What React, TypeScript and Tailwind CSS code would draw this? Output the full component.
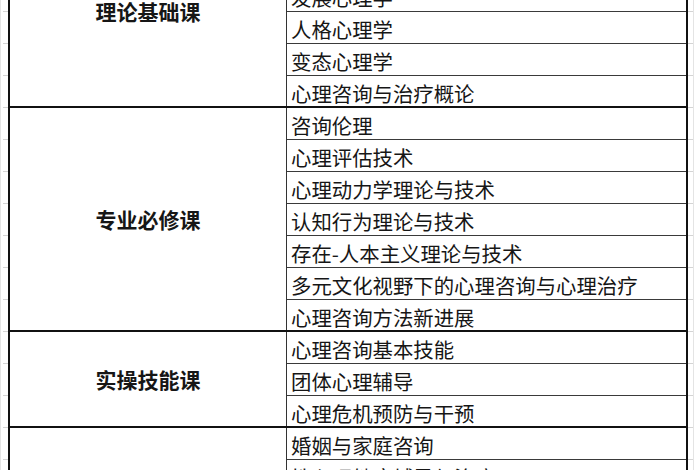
const groups: { label: string; items: string[] }[] = [
  {
    label: "理论基础课",
    items: ["普通心理学", "社会心理学", "发展心理学", "人格心理学", "变态心理学", "心理咨询与治疗概论"],
  },
  {
    label: "专业必修课",
    items: [
      "咨询伦理",
      "心理评估技术",
      "心理动力学理论与技术",
      "认知行为理论与技术",
      "存在-人本主义理论与技术",
      "多元文化视野下的心理咨询与心理治疗",
      "心理咨询方法新进展",
    ],
  },
  {
    label: "实操技能课",
    items: ["心理咨询基本技能", "团体心理辅导", "心理危机预防与干预"],
  },
  {
    label: "选修课",
    items: ["婚姻与家庭咨询", "性心理健康辅导与治疗", "儿童青少年心理咨询", "心理测量"],
  },
];

const totalRows = groups.reduce((n, g) => n + g.items.length, 0);

// spreadsheet gridlines outside the bordered table
function Gutter({ className }: { className: string }) {
  return (
    <div className={className}>
      {Array.from({ length: totalRows }).map((_, i) => (
        <div key={i} className="h-[32px] border-b border-[#d4d4d4]" />
      ))}
    </div>
  );
}

export default function App() {
  return (
    <div
      className="w-[700px] h-[470px] overflow-hidden bg-white text-[#161616]"
      style={{ fontFamily: '"Noto Sans CJK SC", "Noto Sans", sans-serif' }}
    >
      <div className="flex -mt-[84px]">
        <Gutter className="w-[8px] shrink-0 border-l border-[#e4e4e4] pl-[2px]" />
        <div className="w-[680px] shrink-0 border-x-2 border-[#111]">
          {groups.map((g) => (
            <div key={g.label} className="flex border-b-2 border-[#111]">
              <div className="w-[277px] shrink-0 border-r border-[#333] flex items-center justify-center text-[21px] font-bold pt-[2px]">
                {g.label}
              </div>
              <div className="flex-1 flex flex-col">
                {g.items.map((it) => (
                  <div
                    key={it}
                    className="h-[32px] last:h-[30px] border-b border-[#3a3a3a] last:border-b-0 pl-[4px] text-[20.4px] leading-[30px] pt-[2px] whitespace-nowrap"
                  >
                    {it}
                  </div>
                ))}
              </div>
            </div>
          ))}
        </div>
        <Gutter className="flex-1 border-r border-[#e4e4e4] mr-[6px]" />
      </div>
    </div>
  );
}
